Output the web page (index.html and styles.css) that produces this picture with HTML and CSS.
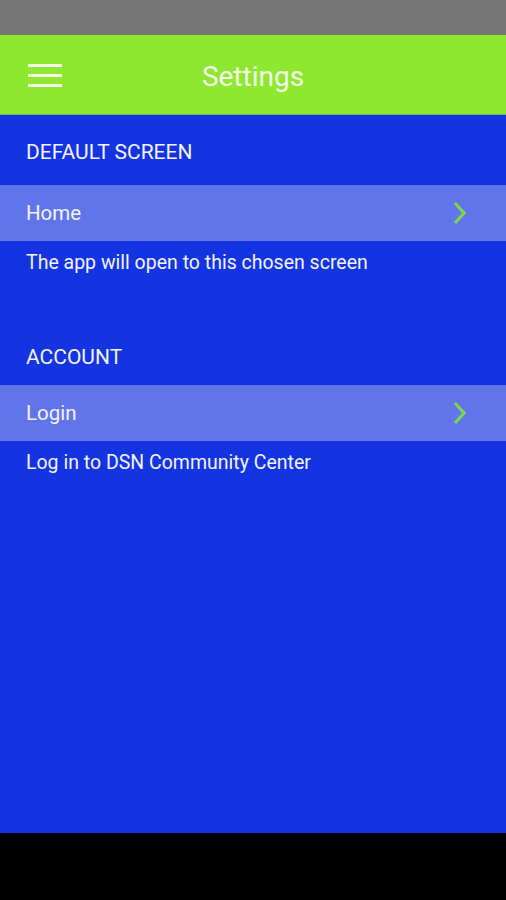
FILE: index.html
```html
<!DOCTYPE html>
<html>
<head>
<meta name="viewport" content="width=device-width, initial-scale=1.0">
<link rel="stylesheet" href="styles.css">
<title>Settings</title>
</head>
<body>
<div class="phone">
<div class="status"></div>
<div class="toolbar">
<div class="menu"><span></span><span></span><span></span></div>
<div class="title">Settings</div>
</div>
<div class="content">
<div class="section">DEFAULT SCREEN</div>
<div class="row"><span>Home</span>
<svg class="chev" width="16" height="24" viewBox="0 0 16 24"><path d="M3 2 L12 12 L3 22" fill="none" stroke="#7fd548" stroke-width="3.2"/></svg>
</div>
<div class="hint">The app will open to this chosen screen</div>
<div class="section second">ACCOUNT</div>
<div class="row"><span>Login</span>
<svg class="chev" width="16" height="24" viewBox="0 0 16 24"><path d="M3 2 L12 12 L3 22" fill="none" stroke="#7fd548" stroke-width="3.2"/></svg>
</div>
<div class="hint">Log in to DSN Community Center</div>
</div>
<div class="navbar"></div>
</div>
</body>
</html>
```
FILE: styles.css
```css
body{
margin:0;
font-family:Roboto, "Noto Sans", sans-serif;
color:#f2f4ff;
}
.phone{
width:506px;
height:900px;
display:flex;
flex-direction:column;
}
.status{
height:35px;
background:#777777;
}
.toolbar{
height:79px;
background:#8ee82f;
border-bottom:1px solid #6fb86a;
display:flex;
align-items:center;
position:relative;
}
.menu{
width:34px;
margin-left:28px;
margin-top:2px;
display:flex;
flex-direction:column;
gap:7px;
}
.menu span{
display:block;
height:3px;
background:#f4fbe8;
}
.title{
position:absolute;
left:0;
right:0;
top:25px;
text-align:center;
font-size:28px;
color:#f4fbe8;
pointer-events:none;
}
.content{
flex:1;
background:#1433e1;
}
.section{
height:66px;
padding-top:4px;
padding-left:26px;
display:flex;
align-items:center;
font-size:21px;
}
.second{
margin-top:32px;
height:56px;
padding-top:14px;
}
.row{
height:56px;
background:#6174e9;
display:flex;
align-items:center;
justify-content:space-between;
padding:0 38px 0 26px;
font-size:20.5px;
}
.chev{
display:block;
}
.hint{
height:42px;
padding-left:26px;
display:flex;
align-items:center;
font-size:19.5px;
}
.navbar{
height:67px;
background:#000;
}
```
